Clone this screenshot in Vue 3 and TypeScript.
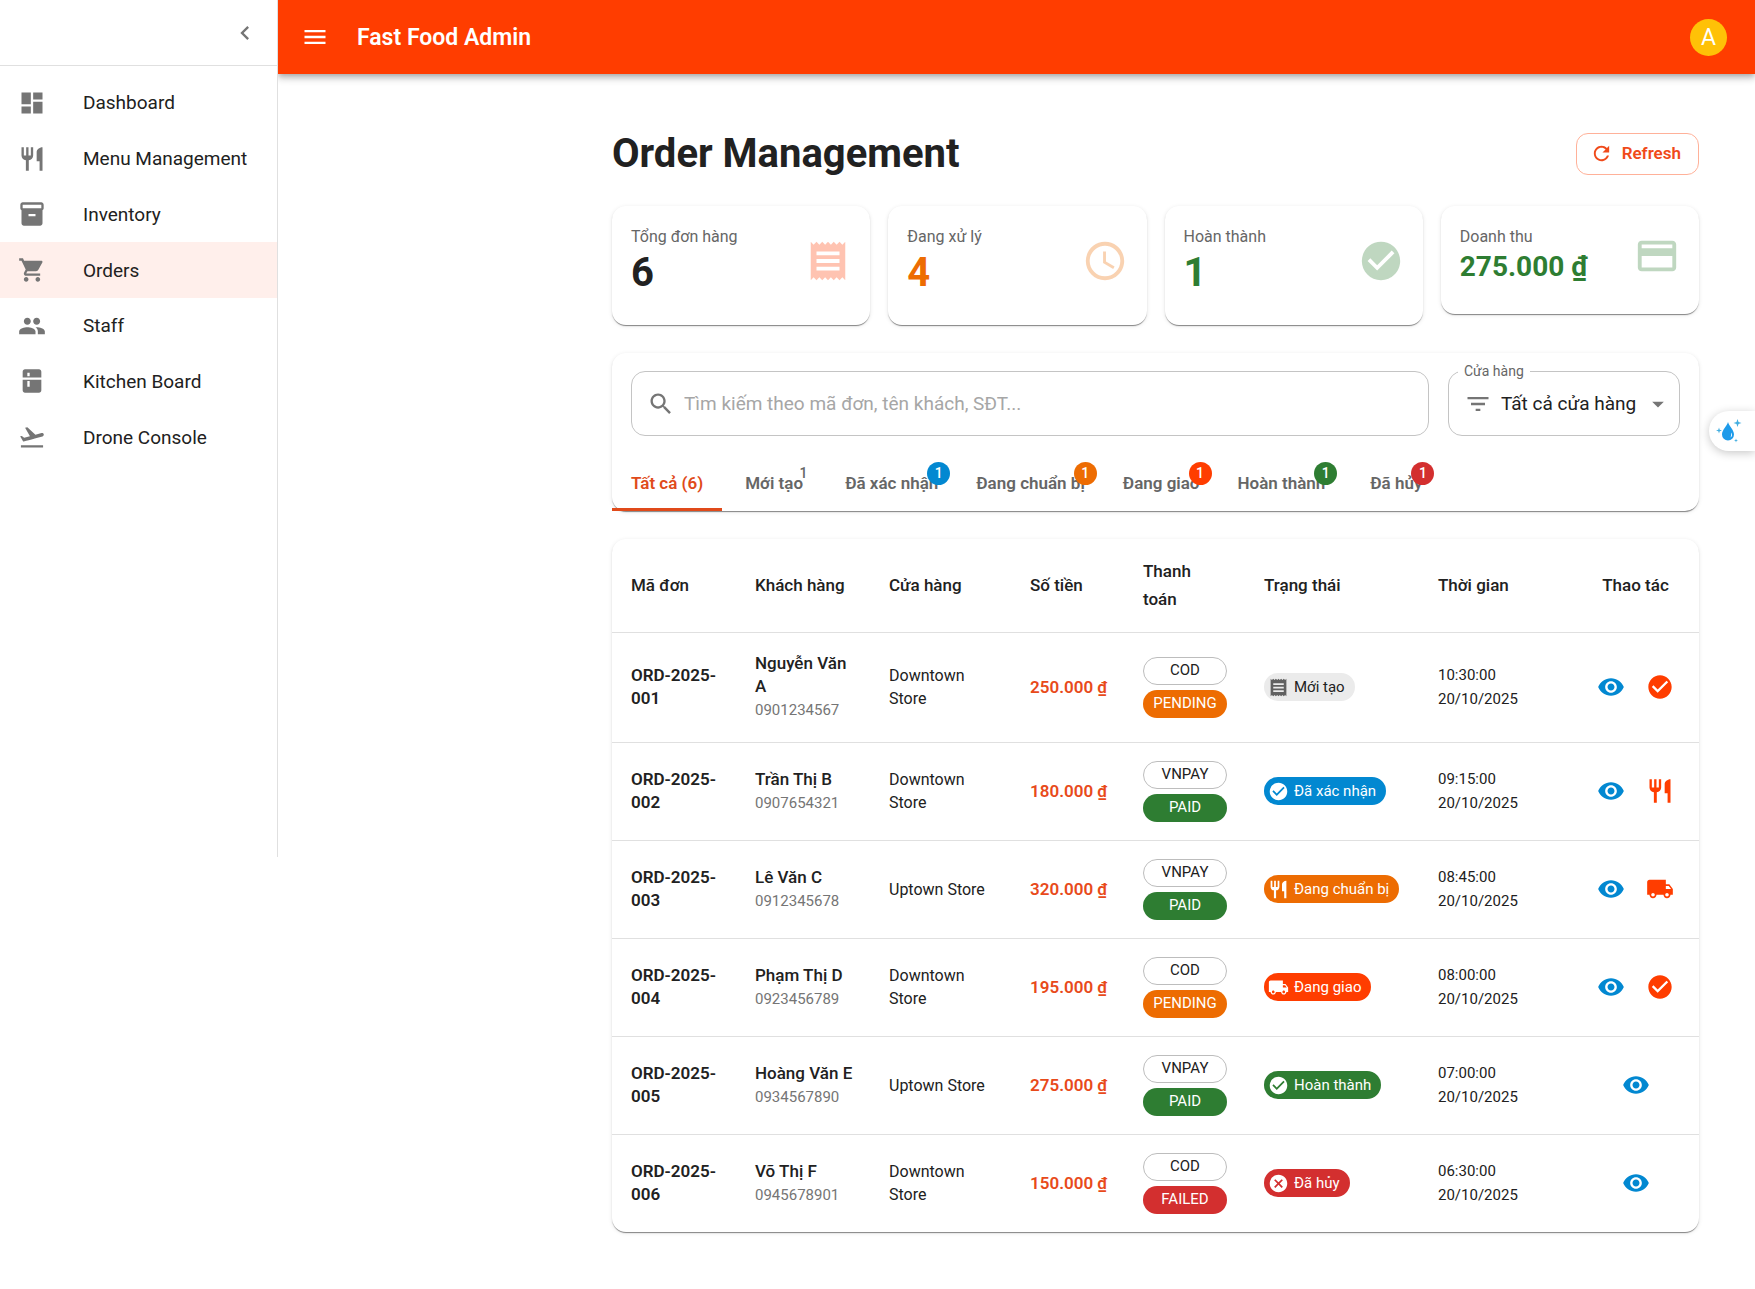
<script setup lang="ts">
import { ref } from 'vue'

const icons: Record<string, string> = {
  dashboard: 'M3 13h8V3H3v10zm0 8h8v-6H3v6zm10 0h8V11h-8v10zm0-18v6h8V3h-8z',
  restaurant:
    'M11 9H9V2H7v7H5V2H3v7c0 2.12 1.66 3.84 3.75 3.97V22h2.5v-9.03C11.34 12.84 13 11.12 13 9V2h-2v7zm5-3v8h2.5v8H21V2c-2.76 0-5 2.24-5 4z',
  inventory:
    'M20 2H4c-1 0-2 .9-2 2v3.01c0 .72.43 1.34 1 1.69V20c0 1.1 1.1 2 2 2h14c.9 0 2-.9 2-2V8.7c.57-.35 1-.97 1-1.69V4c0-1.1-1-2-2-2zm-5 12H9v-2h6v2zm5-7H4V4h16v3z',
  cart: 'M7 18c-1.1 0-1.99.9-1.99 2S5.9 22 7 22s2-.9 2-2-.9-2-2-2zM1 2v2h2l3.6 7.59-1.35 2.45c-.16.28-.25.61-.25.96 0 1.1.9 2 2 2h12v-2H7.42c-.14 0-.25-.11-.25-.25l.03-.12.9-1.63h7.45c.75 0 1.41-.41 1.75-1.03l3.58-6.49c.08-.14.12-.31.12-.48 0-.55-.45-1-1-1H5.21l-.94-2H1zm16 16c-1.1 0-1.99.9-1.99 2s.89 2 1.99 2 2-.9 2-2-.9-2-2-2z',
  people:
    'M16 11c1.66 0 2.99-1.34 2.99-3S17.66 5 16 5c-1.66 0-3 1.34-3 3s1.34 3 3 3zm-8 0c1.66 0 2.99-1.34 2.99-3S9.66 5 8 5C6.34 5 5 6.34 5 8s1.34 3 3 3zm0 2c-2.33 0-7 1.17-7 3.5V19h14v-2.5c0-2.33-4.67-3.5-7-3.5zm8 0c-.29 0-.62.02-.97.05 1.16.84 1.97 1.97 1.97 3.45V19h6v-2.5c0-2.33-4.67-3.5-7-3.5z',
  kitchen:
    'M18 2H6c-1.1 0-2 .9-2 2v5h16V4c0-1.1-.9-2-2-2zm-8 6H8V5h2v3zM4 20c0 1.1.9 2 2 2h12c1.1 0 2-.9 2-2v-9H4v9zm4-8h2v5H8v-5z',
  takeoff:
    'M2.5 19h19v2h-19v-2zm19.57-9.36c-.21-.8-1.04-1.28-1.84-1.06L14.92 10l-6.9-6.43-1.93.51 4.14 7.17-4.97 1.33-1.97-1.54-1.45.39 2.59 4.49s7.12-1.9 16.57-4.43c.81-.23 1.28-1.05 1.07-1.85z',
  chevron: 'M15.41 7.41L14 6l-6 6 6 6 1.41-1.41L10.83 12z',
  menu: 'M3 18h18v-2H3v2zm0-5h18v-2H3v2zm0-7v2h18V6H3z',
  refresh:
    'M17.65 6.35C16.2 4.9 14.21 4 12 4c-4.42 0-7.99 3.58-7.99 8s3.57 8 7.99 8c3.73 0 6.84-2.55 7.73-6h-2.08c-.82 2.33-3.04 4-5.65 4-3.31 0-6-2.69-6-6s2.69-6 6-6c1.66 0 3.14.69 4.22 1.78L13 11h7V4l-2.35 2.35z',
  receipt:
    'M18 17H6v-2h12v2zm0-4H6v-2h12v2zm0-4H6V7h12v2zM3 22l1.5-1.5L6 22l1.5-1.5L9 22l1.5-1.5L12 22l1.5-1.5L15 22l1.5-1.5L18 22l1.5-1.5L21 22V2l-1.5 1.5L18 2l-1.5 1.5L15 2l-1.5 1.5L12 2l-1.5 1.5L9 2 7.5 3.5 6 2 4.5 3.5 3 2v20z',
  clock:
    'M11.99 2C6.47 2 2 6.48 2 12s4.47 10 9.99 10C17.52 22 22 17.52 22 12S17.52 2 11.99 2zM12 20c-4.42 0-8-3.58-8-8s3.58-8 8-8 8 3.58 8 8-3.58 8-8 8zM12.5 7H11v6l5.25 3.15.75-1.23-4.5-2.67z',
  check:
    'M12 2C6.48 2 2 6.48 2 12s4.48 10 10 10 10-4.48 10-10S17.52 2 12 2zm-2 15l-5-5 1.41-1.41L10 14.17l7.59-7.59L19 8l-9 9z',
  card: 'M20 4H4c-1.11 0-1.99.89-1.99 2L2 18c0 1.11.89 2 2 2h16c1.11 0 2-.89 2-2V6c0-1.11-.89-2-2-2zm0 14H4v-6h16v6zm0-10H4V6h16v2z',
  search:
    'M15.5 14h-.79l-.28-.27C15.41 12.59 16 11.11 16 9.5 16 5.91 13.09 3 9.5 3S3 5.91 3 9.5 5.91 16 9.5 16c1.61 0 3.09-.59 4.23-1.57l.27.28v.79l5 4.99L20.49 19l-4.99-5zm-6 0C7.01 14 5 11.99 5 9.5S7.01 5 9.5 5 14 7.01 14 9.5 11.99 14 9.5 14z',
  filter: 'M10 18h4v-2h-4v2zM3 6v2h18V6H3zm3 7h12v-2H6v2z',
  dropdown: 'M7 10l5 5 5-5z',
  eye: 'M12 4.5C7 4.5 2.73 7.61 1 12c1.73 4.39 6 7.5 11 7.5s9.27-3.11 11-7.5c-1.73-4.39-6-7.5-11-7.5zM12 17c-2.76 0-5-2.24-5-5s2.24-5 5-5 5 2.24 5 5-2.24 5-5 5zm0-8c-1.66 0-3 1.34-3 3s1.34 3 3 3 3-1.34 3-3-1.34-3-3-3z',
  truck:
    'M20 8h-3V4H3c-1.1 0-2 .9-2 2v11h2c0 1.66 1.34 3 3 3s3-1.34 3-3h6c0 1.66 1.34 3 3 3s3-1.34 3-3h2v-5l-3-4zM6 18.5c-.83 0-1.5-.67-1.5-1.5s.67-1.5 1.5-1.5 1.5.67 1.5 1.5-.67 1.5-1.5 1.5zm13.5-9l1.96 2.5H17V9.5h2.5zm-1.5 9c-.83 0-1.5-.67-1.5-1.5s.67-1.5 1.5-1.5 1.5.67 1.5 1.5-.67 1.5-1.5 1.5z',
  cancel:
    'M12 2C6.47 2 2 6.47 2 12s4.47 10 10 10 10-4.47 10-10S17.53 2 12 2zm5 13.59L15.59 17 12 13.41 8.41 17 7 15.59 10.59 12 7 8.41 8.41 7 12 10.59 15.59 7 17 8.41 13.41 12 17 15.59z',
}

const navItems = [
  { label: 'Dashboard', icon: 'dashboard' },
  { label: 'Menu Management', icon: 'restaurant' },
  { label: 'Inventory', icon: 'inventory' },
  { label: 'Orders', icon: 'cart', active: true },
  { label: 'Staff', icon: 'people' },
  { label: 'Kitchen Board', icon: 'kitchen' },
  { label: 'Drone Console', icon: 'takeoff' },
]

const stats = [
  { label: 'Tổng đơn hàng', value: '6', icon: 'receipt', tone: 'ink', iconTone: 'primary' },
  { label: 'Đang xử lý', value: '4', icon: 'clock', tone: 'warning', iconTone: 'warning' },
  { label: 'Hoàn thành', value: '1', icon: 'check', tone: 'success', iconTone: 'success' },
  { label: 'Doanh thu', value: '275.000 ₫', icon: 'card', tone: 'success', iconTone: 'success', compact: true },
]

const tabs = [
  { label: 'Tất cả (6)', tone: '' },
  { label: 'Mới tạo', tone: 'plain' },
  { label: 'Đã xác nhận', tone: 'info' },
  { label: 'Đang chuẩn bị', tone: 'warning' },
  { label: 'Đang giao', tone: 'primary' },
  { label: 'Hoàn thành', tone: 'success' },
  { label: 'Đã hủy', tone: 'error' },
]
const activeTab = ref(0)
const keyword = ref('')
const store = ref('all')

interface Order {
  id: string
  customer: string
  phone: string
  store: string
  amount: string
  method: string
  payment: string
  paymentTone: string
  status: string
  statusTone: string
  statusIcon: string
  time: string
  next?: string
  nextLabel?: string
}

const orders: Order[] = [
  { id: 'ORD-2025-001', customer: 'Nguyễn Văn A', phone: '0901234567', store: 'Downtown Store', amount: '250.000 ₫', method: 'COD', payment: 'PENDING', paymentTone: 'warning', status: 'Mới tạo', statusTone: 'neutral', statusIcon: 'receipt', time: '10:30:00', next: 'check', nextLabel: 'Xác nhận' },
  { id: 'ORD-2025-002', customer: 'Trần Thị B', phone: '0907654321', store: 'Downtown Store', amount: '180.000 ₫', method: 'VNPAY', payment: 'PAID', paymentTone: 'success', status: 'Đã xác nhận', statusTone: 'info', statusIcon: 'check', time: '09:15:00', next: 'restaurant', nextLabel: 'Chuẩn bị' },
  { id: 'ORD-2025-003', customer: 'Lê Văn C', phone: '0912345678', store: 'Uptown Store', amount: '320.000 ₫', method: 'VNPAY', payment: 'PAID', paymentTone: 'success', status: 'Đang chuẩn bị', statusTone: 'warning', statusIcon: 'restaurant', time: '08:45:00', next: 'truck', nextLabel: 'Giao hàng' },
  { id: 'ORD-2025-004', customer: 'Phạm Thị D', phone: '0923456789', store: 'Downtown Store', amount: '195.000 ₫', method: 'COD', payment: 'PENDING', paymentTone: 'warning', status: 'Đang giao', statusTone: 'primary', statusIcon: 'truck', time: '08:00:00', next: 'check', nextLabel: 'Hoàn thành' },
  { id: 'ORD-2025-005', customer: 'Hoàng Văn E', phone: '0934567890', store: 'Uptown Store', amount: '275.000 ₫', method: 'VNPAY', payment: 'PAID', paymentTone: 'success', status: 'Hoàn thành', statusTone: 'success', statusIcon: 'check', time: '07:00:00' },
  { id: 'ORD-2025-006', customer: 'Võ Thị F', phone: '0945678901', store: 'Downtown Store', amount: '150.000 ₫', method: 'COD', payment: 'FAILED', paymentTone: 'error', status: 'Đã hủy', statusTone: 'error', statusIcon: 'cancel', time: '06:30:00' },
]
</script>

<template>
  <div class="layout">
    <aside class="sidebar">
      <div class="sidebar-head">
        <button type="button" class="icon-btn" aria-label="Collapse menu">
          <svg class="icon" viewBox="0 0 24 24"><path :d="icons.chevron" /></svg>
        </button>
      </div>
      <nav class="nav">
        <a v-for="item in navItems" :key="item.label" href="#" class="nav-item" :class="{ active: item.active }">
          <svg class="icon" viewBox="0 0 24 24"><path fill-rule="evenodd" :d="icons[item.icon]" /></svg>
          <span>{{ item.label }}</span>
        </a>
      </nav>
    </aside>

    <div class="page">
      <header class="appbar">
        <button type="button" class="icon-btn" aria-label="Menu">
          <svg class="icon" viewBox="0 0 24 24"><path :d="icons.menu" /></svg>
        </button>
        <span class="brand">Fast Food Admin</span>
        <button type="button" class="avatar">A</button>
      </header>

      <main class="main">
        <div class="title-row">
          <h1>Order Management</h1>
          <button type="button" class="refresh">
            <svg viewBox="0 0 24 24"><path :d="icons.refresh" /></svg>
            <span>Refresh</span>
          </button>
        </div>

        <section class="stats">
          <div v-for="s in stats" :key="s.label" class="card stat">
            <div>
              <p class="stat-label">{{ s.label }}</p>
              <p class="stat-value" :class="['text-' + s.tone, { compact: s.compact }]">{{ s.value }}</p>
            </div>
            <svg class="stat-icon" :class="'text-' + s.iconTone" viewBox="0 0 24 24"><path :d="icons[s.icon]" /></svg>
          </div>
        </section>

        <section class="card filters">
          <div class="filter-row">
            <div class="field search">
              <svg class="icon" viewBox="0 0 24 24"><path :d="icons.search" /></svg>
              <input v-model="keyword" type="text" aria-label="Tìm kiếm" placeholder="Tìm kiếm theo mã đơn, tên khách, SĐT..." />
            </div>
            <div class="field store">
              <label for="store">Cửa hàng</label>
              <svg class="icon" viewBox="0 0 24 24"><path :d="icons.filter" /></svg>
              <select id="store" v-model="store">
                <option value="all">Tất cả cửa hàng</option>
                <option value="downtown">Downtown Store</option>
                <option value="uptown">Uptown Store</option>
              </select>
              <svg class="icon caret" viewBox="0 0 24 24"><path :d="icons.dropdown" /></svg>
            </div>
          </div>
          <div class="tabs" role="tablist">
            <button
              v-for="(t, i) in tabs"
              :key="t.label"
              type="button"
              role="tab"
              class="tab"
              :class="{ selected: i === activeTab }"
              :aria-selected="i === activeTab"
              @click="activeTab = i"
            >
              <span class="tab-label">{{ t.label }}<span v-if="t.tone" class="badge" :class="'bg-' + t.tone">1</span></span>
            </button>
          </div>
        </section>

        <section class="card orders">
          <table>
            <thead>
              <tr>
                <th class="c-id">Mã đơn</th>
                <th class="c-customer">Khách hàng</th>
                <th class="c-store">Cửa hàng</th>
                <th class="c-amount">Số tiền</th>
                <th class="c-payment">Thanh toán</th>
                <th class="c-status">Trạng thái</th>
                <th class="c-time">Thời gian</th>
                <th class="c-actions">Thao tác</th>
              </tr>
            </thead>
            <tbody>
              <tr v-for="o in orders" :key="o.id">
                <td class="order-id">{{ o.id }}</td>
                <td>
                  <div class="customer">{{ o.customer }}</div>
                  <div class="phone">{{ o.phone }}</div>
                </td>
                <td>{{ o.store }}</td>
                <td class="amount">{{ o.amount }}</td>
                <td>
                  <div class="payment">
                    <span class="chip outlined">{{ o.method }}</span>
                    <span class="chip" :class="'bg-' + o.paymentTone">{{ o.payment }}</span>
                  </div>
                </td>
                <td>
                  <span class="chip status" :class="'bg-' + o.statusTone">
                    <svg viewBox="0 0 24 24"><path :d="icons[o.statusIcon]" /></svg>{{ o.status }}
                  </span>
                </td>
                <td class="time">{{ o.time }}<br />20/10/2025</td>
                <td>
                  <div class="actions">
                    <button type="button" class="icon-btn text-info" aria-label="Xem chi tiết">
                      <svg class="icon" viewBox="0 0 24 24"><path :d="icons.eye" /></svg>
                    </button>
                    <button v-if="o.next" type="button" class="icon-btn text-primary" :aria-label="o.nextLabel">
                      <svg class="icon" viewBox="0 0 24 24"><path :d="icons[o.next]" /></svg>
                    </button>
                  </div>
                </td>
              </tr>
            </tbody>
          </table>
        </section>
      </main>
    </div>

    <button type="button" class="floating" aria-label="Assistant">
      <svg viewBox="0 0 26 26">
        <path fill="#1e9bea" d="M12 4c1 4 6 8 6 12.500a6 6 0 0 1-12 0C6 12 11 8 12 4z" />
        <path fill="#fff" d="M15 14.500c1.500 1.500 1.500 4-.5 5 .7-1.600.8-3.300.5-5z" />
        <path fill="#43aee0" d="M21.500 1l1 3 3 1-3 1-1 3-1-3-3-1 3-1zM3 9.500l.7 2.300 2.300.7-2.300.7-.7 2.300-.7-2.300-2.300-.7 2.300-.7zM20 20.500l.5 1.500 1.500.5-1.500.5-.5 1.500-.5-1.500-1.500-.5 1.500-.5z" />
      </svg>
    </button>
  </div>
</template>

<style>
body {
  margin: 0;
  background: #fff;
}
</style>

<style scoped>
.layout {
  display: flex;
  align-items: flex-start;
  font-family: Roboto, 'Noto Sans', sans-serif;
  font-size: 16px;
  line-height: 23px;
  color: #212121;
}
.layout *,
.layout {
  box-sizing: border-box;
}
button {
  font: inherit;
  color: inherit;
  background: none;
  border: 0;
  padding: 0;
  cursor: pointer;
}
.icon {
  display: block;
  width: 28px;
  height: 28px;
  flex: none;
}
svg {
  fill: currentColor;
}

.text-ink { color: #212121; }
.text-primary { color: #ff3d00; }
.text-warning { color: #ed6c02; }
.text-success { color: #2e7d32; }
.text-info { color: #0288d1; }
.bg-primary { background: #ff3d00; color: #fff; }
.bg-warning { background: #ed6c02; color: #fff; }
.bg-success { background: #2e7d32; color: #fff; }
.bg-info { background: #0288d1; color: #fff; }
.bg-error { background: #d32f2f; color: #fff; }
.bg-neutral { background: #ebebeb; }

/* Sidebar */
.sidebar {
  flex: none;
  width: 278px;
  min-height: 66.5vh;
  border-right: 1px solid #e0e0e0;
}
.sidebar-head {
  display: flex;
  align-items: center;
  justify-content: flex-end;
  height: 66px;
  padding-right: 18px;
  border-bottom: 1px solid #e0e0e0;
  color: #757575;
}
.nav {
  display: flex;
  flex-direction: column;
  height: 408px;
  padding: 9px 0;
}
.nav-item {
  flex: 1;
  display: flex;
  align-items: center;
  gap: 37px;
  padding: 0 18px;
  font-size: 19px;
  color: #212121;
  text-decoration: none;
}
.nav-item .icon {
  color: #757575;
}
.nav-item.active {
  background: #ffefeb;
}

/* Top bar */
.page {
  flex: 1;
  min-width: 0;
}
.appbar {
  display: flex;
  align-items: center;
  gap: 28px;
  height: 74px;
  padding: 0 28px 0 18px;
  background: #ff3d00;
  color: #fff;
  box-shadow: 0 2px 5px -1px rgba(0, 0, 0, 0.2), 0 5px 6px rgba(0, 0, 0, 0.14), 0 1px 12px rgba(0, 0, 0, 0.12);
  clip-path: inset(0 0 -24px 0);
}
.brand {
  font-size: 23px;
  font-weight: 600;
}
.avatar {
  width: 37px;
  height: 37px;
  margin-left: auto;
  border-radius: 50%;
  background: #ffc107;
  font-size: 23px;
}

/* Content */
.main {
  margin-left: 278px;
  padding: 55px 56px;
  display: flex;
  flex-direction: column;
  gap: 28px;
}
.title-row {
  display: flex;
  align-items: center;
  justify-content: space-between;
}
h1 {
  margin: 0;
  font-size: 40px;
  line-height: 49px;
  font-weight: 700;
}
.refresh {
  display: flex;
  align-items: center;
  gap: 9px;
  height: 42px;
  padding: 0 17px 0 13px;
  border: 1px solid #ffb199;
  border-radius: 12px;
  color: #f04a1a;
  font-size: 17px;
  font-weight: 600;
}
.refresh svg {
  width: 23px;
  height: 23px;
}
.card {
  border-radius: 14px;
  background: #fff;
  box-shadow: 0 2px 1px -1px rgba(0, 0, 0, 0.3), 0 1px 1px rgba(0, 0, 0, 0.2), 0 1px 4px rgba(0, 0, 0, 0.1);
}
.stats {
  display: grid;
  grid-template-columns: repeat(4, 1fr);
  align-items: start;
  gap: 18px;
}
.stat {
  display: flex;
  align-items: center;
  justify-content: space-between;
  padding: 19px 19px 28px;
}
.stat p {
  margin: 0;
}
.stat-label {
  color: #666;
}
.stat-value {
  font-size: 40px;
  line-height: 49px;
  font-weight: 700;
}
.stat .compact {
  font-size: 28px;
  line-height: 38px;
}
.stat-icon {
  width: 46px;
  height: 46px;
  opacity: 0.3;
}

/* Filters */
.filter-row {
  display: flex;
  gap: 19px;
  padding: 18px 19px;
}
.field {
  position: relative;
  display: flex;
  align-items: center;
  height: 65px;
  border: 1px solid #c4c4c4;
  border-radius: 14px;
  font-size: 19px;
}
.field .icon {
  color: #757575;
}
.search {
  flex: 1;
  gap: 9px;
  padding: 0 15px;
}
.field input,
.field select {
  flex: 1;
  min-width: 0;
  height: 100%;
  padding: 0;
  border: 0;
  outline: 0;
  background: none;
  appearance: none;
  font: inherit;
  color: #212121;
}
.field input::placeholder {
  color: #a6a6a6;
  opacity: 1;
}
.store {
  width: 232px;
  gap: 9px;
  padding: 0 7px 0 15px;
}
.store label {
  position: absolute;
  top: -12px;
  left: 9px;
  padding: 0 6px;
  background: #fff;
  font-size: 14px;
  color: #666;
}
.store .caret {
  margin-left: -9px;
  pointer-events: none;
}
.tabs {
  display: flex;
}
.tab {
  min-width: 104px;
  height: 57px;
  padding: 0 19px;
  border-bottom: 3px solid transparent;
  border-top: 3px solid transparent;
  color: #666;
  font-size: 17px;
  font-weight: 600;
  line-height: 20px;
}
.tab.selected {
  color: #e04a1a;
  border-bottom-color: #e04a1a;
}
.tab-label {
  position: relative;
}
.badge {
  position: absolute;
  top: -11px;
  right: -12px;
  width: 23px;
  height: 23px;
  border-radius: 50%;
  font-size: 14px;
  font-weight: 500;
  line-height: 23px;
  text-align: center;
}

/* Orders table */
table {
  width: 100%;
  table-layout: fixed;
  border-collapse: collapse;
}
th,
td {
  padding: 0 16px 0 19px;
  border-bottom: 1px solid #e0e0e0;
  text-align: left;
}
th {
  height: 93px;
  font-size: 17px;
  font-weight: 500;
  line-height: 28px;
}
td {
  height: 98px;
}
tbody tr:first-child td {
  height: 110px;
}
tbody tr:last-child td {
  border-bottom: 0;
}
.c-id { width: 124px; }
.c-customer { width: 134px; }
.c-store { width: 141px; }
.c-amount { width: 113px; }
.c-payment { width: 121px; padding-right: 19px; }
.c-status { width: 174px; }
.c-time { width: 153px; }
.c-actions { width: 127px; padding-left: 16px; text-align: center; }
.order-id {
  font-size: 17px;
  font-weight: 600;
}
.customer {
  font-size: 17px;
  font-weight: 500;
}
.phone {
  font-size: 15px;
  line-height: 24px;
  color: #757575;
}
.amount {
  color: #e84a1a;
  font-size: 17px;
  font-weight: 600;
  white-space: nowrap;
}
.payment {
  display: flex;
  flex-direction: column;
  gap: 5px;
  width: 84px;
}
.chip {
  display: flex;
  align-items: center;
  justify-content: center;
  height: 28px;
  border-radius: 14px;
  font-size: 15px;
  white-space: nowrap;
}
.chip.outlined {
  border: 1px solid #bdbdbd;
}
.chip.status {
  display: inline-flex;
  gap: 5px;
  padding: 0 10px 0 4px;
  vertical-align: middle;
}
.status svg {
  width: 21px;
  height: 21px;
}
.status.bg-neutral svg {
  color: #616161;
}
.time {
  font-size: 15px;
  line-height: 24px;
}
.actions {
  display: flex;
  justify-content: center;
  gap: 9px;
  margin: 0 -8px 0 -11px;
}
.icon-btn {
  display: flex;
  align-items: center;
  justify-content: center;
  width: 40px;
  height: 40px;
  border-radius: 50%;
  flex: none;
}
.appbar .icon-btn {
  width: 38px;
  margin-right: -5px;
}
.sidebar-head .icon-btn {
  width: 28px;
}

/* Assistant tab pinned to the window edge */
.floating {
  position: fixed;
  top: 411px;
  right: 0;
  display: flex;
  align-items: center;
  width: 46px;
  height: 40px;
  padding-left: 7px;
  border-radius: 20px 0 0 20px;
  background: #fff;
  box-shadow: 0 2px 10px rgba(0, 0, 0, 0.22);
}
.floating svg {
  width: 26px;
  height: 26px;
}
</style>
